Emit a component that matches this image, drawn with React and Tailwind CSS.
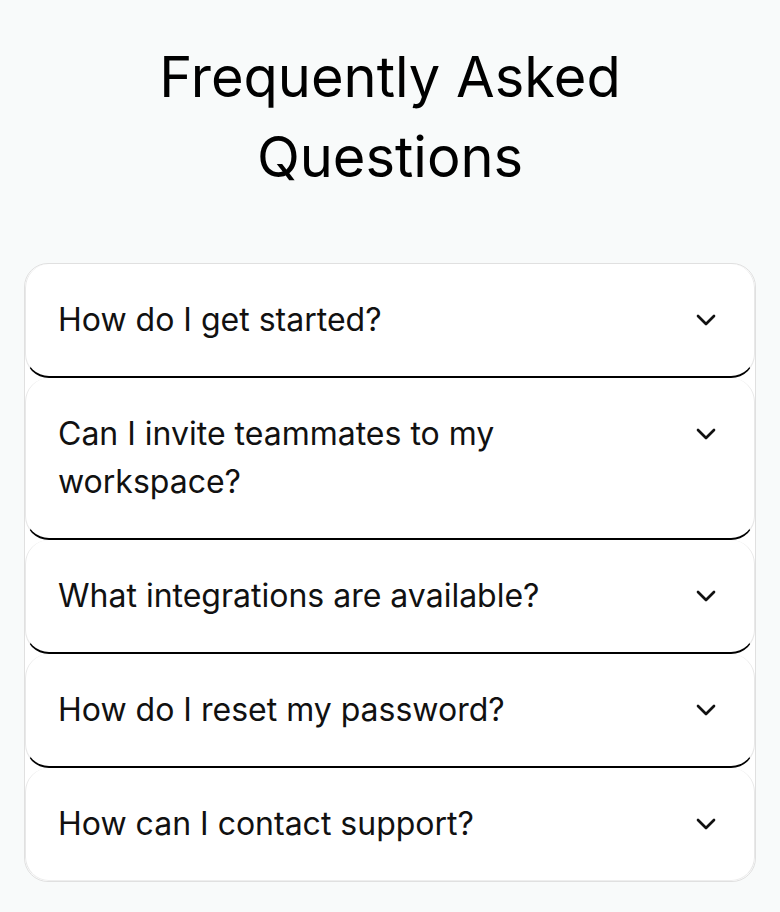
import React, { useState } from 'react';
import { ChevronDown } from 'lucide-react';

const faqs = [
  { q: 'How do I get started?', a: 'Create an account, set up your first workspace and follow the onboarding checklist.' },
  { q: 'Can I invite teammates to my workspace?', a: 'Yes. Open workspace settings and send invites by email.' },
  { q: 'What integrations are available?', a: 'We connect with Slack, GitHub, Google Drive and many more.' },
  { q: 'How do I reset my password?', a: 'Use the "Forgot password" link on the sign-in page.' },
  { q: 'How can I contact support?', a: 'Reach us any time through the help center chat.' },
];

const FaqItem = ({ item, isLast, isOpen, onToggle }) => (
  <div
    className={`bg-white rounded-3xl border-x border-[#e8e8e8] ${
      isLast ? 'border-b border-b-[#eeeeee]' : 'border-b-2 border-b-black'
    }`}
  >
    <button
      onClick={onToggle}
      className="w-full flex items-start justify-between gap-6 px-8 py-8 text-left"
    >
      <span className="text-[32px] leading-[48px] text-[#111111]">{item.q}</span>
      <span className="h-12 flex items-center shrink-0">
        <ChevronDown
          className={`w-8 h-8 text-[#111111] transition-transform ${isOpen ? 'rotate-180' : ''}`}
        />
      </span>
    </button>
    {isOpen && (
      <div className="px-8 pb-8 -mt-4 text-xl text-gray-600">{item.a}</div>
    )}
  </div>
);

export default function App() {
  const [open, setOpen] = useState(null);

  return (
    <div
      className="min-h-screen bg-[#f8fafa] px-6 pt-[37px] pb-8"
      style={{ fontFamily: 'Inter, "Noto Sans", sans-serif' }}
    >
      {/* Heading */}
      <h1 className="text-center text-[56px] leading-[80px] font-normal text-black mb-[66px] px-16">
        Frequently Asked Questions
      </h1>

      {/* Accordion */}
      <div className="border border-[#e0e0e0] rounded-3xl overflow-hidden bg-white">
        {faqs.map((item, index) => (
          <FaqItem
            key={index}
            item={item}
            isLast={index === faqs.length - 1}
            isOpen={open === index}
            onToggle={() => setOpen(open === index ? null : index)}
          />
        ))}
      </div>
    </div>
  );
}
